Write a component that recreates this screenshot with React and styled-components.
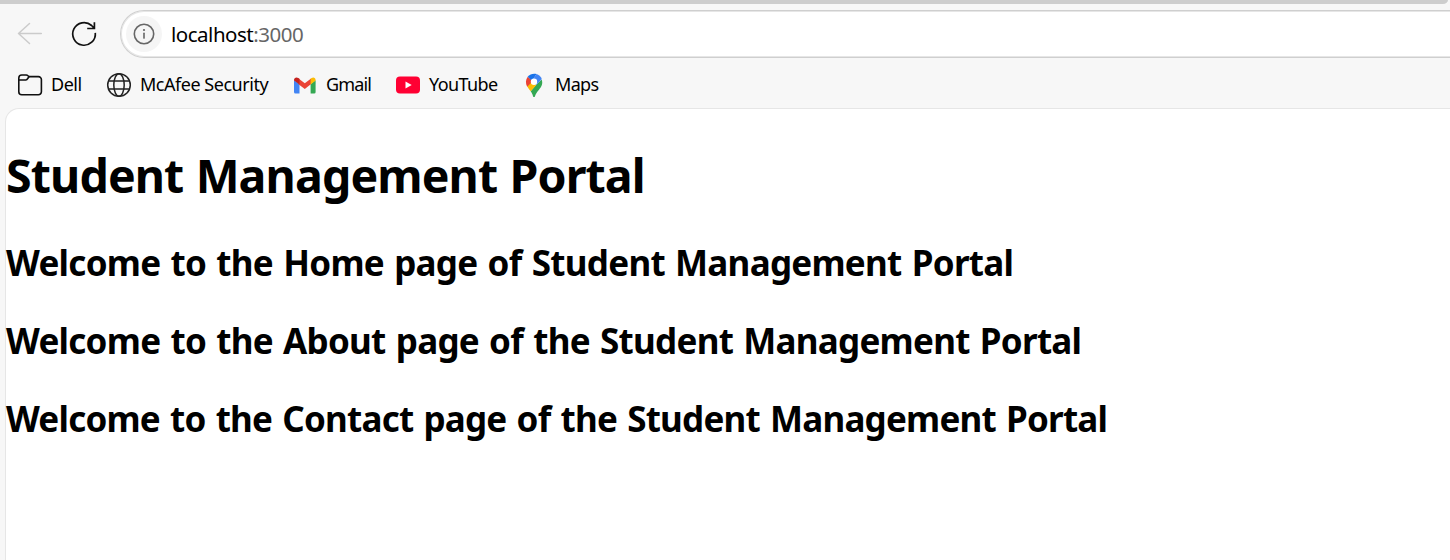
import React from "react";
import styled, { createGlobalStyle } from "styled-components";

const GlobalStyle = createGlobalStyle`
  * { box-sizing: border-box; }
  html, body { margin: 0; height: 100%; overflow: hidden; }
  body { background: #f7f7f7; font-family: "Noto Sans", "Open Sans", sans-serif; color: #000; }
`;

const Browser = styled.div`
  height: 560px;
  display: flex;
  flex-direction: column;
  overflow: hidden;
  background: #f7f7f7;
`;
const TabStrip = styled.div`
  height: 4px;
  flex: none;
  margin-right: 2px;
  background: #cdcdcd;
  border-bottom-right-radius: 5px 4px;
`;
const Toolbar = styled.div`
  flex: none;
  display: flex;
  align-items: center;
  height: 60px;
  padding-left: 16px;
`;
const NavButton = styled.span`
  display: flex;
  width: 28px;
  height: 28px;
  margin-right: ${(p) => p.$gap}px;
`;
const AddressBar = styled.div`
  flex: 1;
  display: flex;
  align-items: center;
  height: 48px;
  margin-right: -2px;
  padding-left: 5px;
  background: #fff;
  border: 1px solid #cfcfcf;
  border-right: 0;
  border-radius: 24px 0 0 24px;
  box-shadow: inset 0 0 0 1px #e6e6e6;
`;
const SiteInfo = styled.span`
  display: flex;
  width: 36px;
  height: 36px;
  align-items: center;
  justify-content: center;
  border-radius: 50%;
  background: #f5f5f5;
`;
const Url = styled.span`
  margin-left: 9px;
  font-size: 20.5px;
  line-height: 28px;
  letter-spacing: -0.48px;
  white-space: nowrap;
`;
const Port = styled.span`
  color: #666;
`;
const Bookmarks = styled.div`
  flex: none;
  display: flex;
  align-items: center;
  height: 44px;
  padding: 0 0 2px 16px;
`;
const Bookmark = styled.div`
  display: flex;
  align-items: center;
  width: ${(p) => p.$width}px;
`;
const BookmarkIcon = styled.span`
  display: flex;
  flex: none;
  width: 28px;
  height: 28px;
  margin-right: 7px;
`;
const Label = styled.span`
  padding-bottom: 1px;
  font-size: 18px;
  line-height: 27px;
  letter-spacing: ${(p) => p.$track}px;
  white-space: nowrap;
`;
const Page = styled.main`
  flex: 1;
  margin-left: 5px;
  padding-top: 34px;
  background: #fff;
  border: solid #e6e6e6;
  border-width: 1px 0 0 1px;
  border-top-left-radius: 14px;
`;
const Title = styled.h1`
  margin: 0 0 32px;
  font-size: 46.5px;
  line-height: 64px;
  letter-spacing: -0.88px;
  word-spacing: 1px;
  white-space: nowrap;
`;
const Heading = styled.h2`
  margin: 0 0 30px;
  font-size: 35px;
  line-height: 48px;
  letter-spacing: ${(p) => p.$track}px;
  word-spacing: 1.8px;
  white-space: nowrap;
`;

const Svg = ({ children, ...rest }) => (
  <svg width="28" height="28" viewBox="0 0 28 28" fill="none" strokeLinecap="round" strokeLinejoin="round" {...rest}>
    {children}
  </svg>
);
const BackIcon = () => (
  <Svg stroke="#cbcbcb" strokeWidth="1.5"><path d="M25.3 13.5H2.5M13.5 3.5l-11 10 11 10" /></Svg>
);
const ReloadIcon = () => (
  <Svg stroke="#111" strokeWidth="1.7" strokeLinecap="butt" strokeLinejoin="miter">
    <path d="M25.3 12.8A11.3 11.3 0 1 1 21.6 5.5L24.4 8.4M24.4 2.2v6.3h-7.2" />
  </Svg>
);
const InfoIcon = () => (
  <Svg stroke="#666" strokeWidth="1.6">
    <circle cx="14" cy="14" r="9.7" />
    <path d="M14 13.3v4.8" />
    <circle cx="14" cy="10" r="1.1" fill="#666" stroke="none" />
  </Svg>
);
const FolderIcon = () => (
  <Svg stroke="#111" strokeWidth="1.6">
    <path d="M2.8 7a3 3 0 0 1 3-3h4.5c1.2 0 1.8 1 2.7 1.6h9.4a3 3 0 0 1 3 3v12.1a3 3 0 0 1-3 3H5.8a3 3 0 0 1-3-3z" />
    <path d="M2.8 9h7.1c1.4 0 2.1-2.2 3.1-3.3" />
  </Svg>
);
const GlobeIcon = () => (
  <Svg stroke="#222" strokeWidth="1.5">
    <circle cx="14" cy="14" r="11.3" />
    <ellipse cx="14" cy="14" rx="5.2" ry="11.3" />
    <path d="M3.8 10h20.4M3.8 18h20.4" />
  </Svg>
);
const GmailIcon = () => (
  <Svg viewBox="-1 0 28 28">
    <path fill="#4285f4" d="M2 9.3l5.5 3.8v9.3h-4A1.5 1.5 0 0 1 2 20.9z" />
    <path fill="#34a853" d="M18.6 13.1l5-3.8v11.6a1.5 1.5 0 0 1-1.5 1.5h-3.5z" />
    <path fill="#ea4335" d="M6.5 7.5l6.3 4.7 6.3-4.7v5.6L12.8 18 6.5 13.2z" />
    <path fill="#c5221f" d="M2 9c0-2.5 2.6-3.2 4.3-2l1.2.8v5.7L2 9.5z" />
    <path fill="#fbbc04" d="M23.6 9c0-2.5-2.4-3.2-4-2l-1 .8v5.7l5-4z" />
  </Svg>
);
const YouTubeIcon = () => (
  <Svg>
    <rect x="2" y="5.5" width="24" height="17" rx="4" fill="#ff0033" />
    <path fill="#fff" d="M11.5 10.4v7.2l6.2-3.6z" />
  </Svg>
);
const MapsIcon = () => (
  <Svg>
    <path fill="#34a853" d="M21.6 8.5c1.7 4.2-.1 7.2-2.6 10.2-2.2 2.7-3.5 4.4-4 6.5-.3 1.2-1.7 1.2-2 0-.4-1.8-1.1-3.2-2.3-4.9L16 14z" />
    <path fill="#fbbc04" d="M7.2 15.3L12 9.5 17.2 13 10.7 20.3C9.3 18.4 8 17.1 7.2 15.3z" />
    <path fill="#ea4335" d="M7.8 5.7l5 4.2-5.6 5.8C5.4 12.3 5.5 8.4 7.8 5.7z" />
    <path fill="#1a73e8" d="M7.7 5.8C9.8 3.3 13.2 2 16.5 3L12 10z" />
    <path fill="#4285f4" d="M16.5 3c2.3.7 4.3 2.4 5.3 5.1L16.3 14 12 9.5z" />
    <circle cx="14" cy="10.8" r="3.2" fill="#fff" />
  </Svg>
);
const bookmarks = [
  { label: "Dell", Icon: FolderIcon, width: 89, track: -0.5 },
  { label: "McAfee Security", Icon: GlobeIcon, width: 186, track: -0.47 },
  { label: "Gmail", Icon: GmailIcon, width: 103, track: -0.85 },
  { label: "YouTube", Icon: YouTubeIcon, width: 126, track: -0.6 },
  { label: "Maps", Icon: MapsIcon, width: 90, track: -0.65 },
];

const sections = [
  { text: "Welcome to the Home page of Student Management Portal", track: -0.72 },
  { text: "Welcome to the About page of the Student Management Portal", track: -0.73 },
  { text: "Welcome to the Contact page of the Student Management Portal", track: -0.78 },
];

export default function App() {
  return (
    <Browser>
      <GlobalStyle />
      <TabStrip />
      <Toolbar>
        <NavButton $gap={26}><BackIcon /></NavButton>
        <NavButton $gap={22}><ReloadIcon /></NavButton>
        <AddressBar>
          <SiteInfo><InfoIcon /></SiteInfo>
          <Url>localhost<Port>:3000</Port></Url>
        </AddressBar>
      </Toolbar>
      <Bookmarks>
        {bookmarks.map(({ label, Icon, width, track }) => (
          <Bookmark key={label} $width={width}>
            <BookmarkIcon><Icon /></BookmarkIcon>
            <Label $track={track}>{label}</Label>
          </Bookmark>
        ))}
      </Bookmarks>
      <Page>
        <Title>Student Management Portal</Title>
        {sections.map((s) => (
          <Heading key={s.text} $track={s.track}>{s.text}</Heading>
        ))}
      </Page>
    </Browser>
  );
}
